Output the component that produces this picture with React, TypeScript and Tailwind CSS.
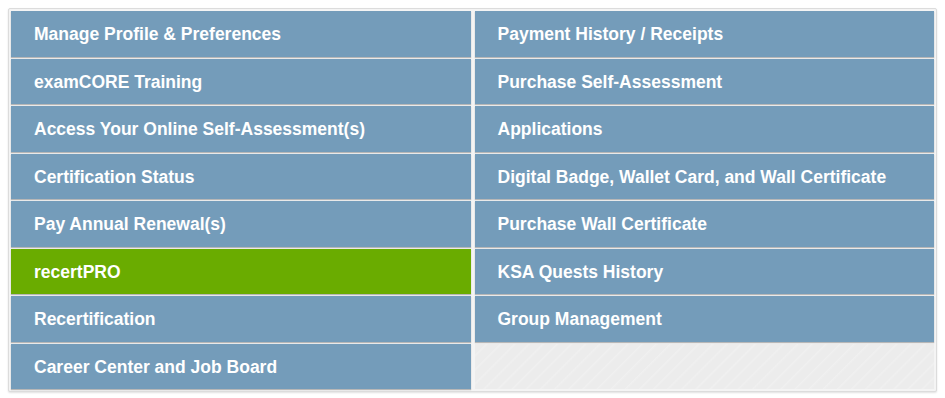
import React from "react";

const left = [
  "Manage Profile & Preferences",
  "examCORE Training",
  "Access Your Online Self-Assessment(s)",
  "Certification Status",
  "Pay Annual Renewal(s)",
  "recertPRO",
  "Recertification",
  "Career Center and Job Board",
];
const right = [
  "Payment History / Receipts",
  "Purchase Self-Assessment",
  "Applications",
  "Digital Badge, Wallet Card, and Wall Certificate",
  "Purchase Wall Certificate",
  "KSA Quests History",
  "Group Management",
];

function Btn({ label, green }: { label: string; green?: boolean }) {
  return (
    <a
      href="#"
      className={
        "flex h-[45.5px] items-center pl-[23px] pt-[1px] text-[17.5px] font-bold text-white no-underline shadow-[0_1px_1px_rgba(0,0,0,0.25)] " +
        (green ? "bg-[#6aac00]" : "bg-[#749cba]")
      }
      style={{ fontFamily: '"Liberation Sans", Arial, sans-serif' }}
    >
      {label}
    </a>
  );
}

export default function App() {
  return (
    <div className="min-h-[398px] bg-white pl-2 pt-2">
      <div className="w-[929px] rounded-[2px] border border-[#dcdcdc] bg-[#f4f4f4] p-[2px] shadow-[0_1px_2px_rgba(0,0,0,0.12)]">
        <div className="grid grid-cols-2 gap-x-[4px]">
          <div className="flex flex-col gap-[2px]">
            {left.map((l) => (
              <Btn key={l} label={l} green={l === "recertPRO"} />
            ))}
          </div>
          <div className="flex flex-col gap-[2px]">
            {right.map((l) => (
              <Btn key={l} label={l} />
            ))}
            <div className="h-[45.5px] bg-[#ececec] bg-[repeating-linear-gradient(135deg,#ececec_0px,#ececec_7px,#f0f0f0_8px,#ececec_10px)]" />
          </div>
        </div>
      </div>
    </div>
  );
}
